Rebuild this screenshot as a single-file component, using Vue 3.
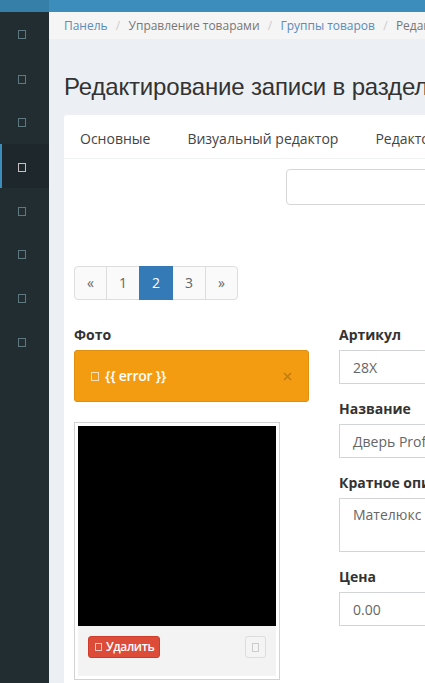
<script setup>
const menu = [0, 1, 2, 3, 4, 5, 6, 7]
const nudged = [1, 3, 4]
const pages = ['«', '1', '2', '3', '»']
const fields = [
  { label: 'Артикул', value: '28X' },
  { label: 'Название', value: 'Дверь Profil Doors' },
  { label: 'Кратное описание', value: 'Мателюкс', area: true },
  { label: 'Цена', value: '0.00' },
]
</script>

<template>
  <div class="page">
    <header class="topbar"><div class="logo"></div></header>
    <div class="body">
      <aside class="sidebar">
        <a v-for="i in menu" :key="i" class="item" :class="{ active: i === 3, nudged: nudged.includes(i) }"><i class="glyph"></i></a>
      </aside>
      <main class="content">
        <nav class="crumbs">
          <a>Панель</a><span class="sep">/</span><span>Управление товарами</span><span class="sep">/</span><a>Группы товаров</a><span class="sep">/</span><span>Редактирование</span>
        </nav>
        <h1>Редактирование записи в разделе</h1>
        <section class="card">
          <div class="tabs"><a>Основные</a><a>Визуальный редактор</a><a>Редактор</a></div>
          <div class="search"></div>
          <div class="pages">
            <a v-for="p in pages" :key="p" :class="{ on: p === '2' }">{{ p }}</a>
          </div>
          <div class="cols">
            <div class="photo">
              <label>Фото</label>
              <div class="alert">
                <i class="glyph"></i><span class="msg" v-pre>{{ error }}</span>
                <svg class="close" viewBox="0 0 9 9"><path d="M1 1 8 8M8 1 1 8" /></svg>
              </div>
              <div class="thumb">
                <div class="image"></div>
                <div class="caption">
                  <button class="delete"><i class="glyph"></i><span>Удалить</span></button>
                  <button class="move"><i class="glyph"></i></button>
                </div>
              </div>
            </div>
            <div class="form">
              <div v-for="f in fields" :key="f.label" class="group">
                <label>{{ f.label }}</label>
                <div class="control" :class="{ area: f.area }">{{ f.value }}</div>
              </div>
            </div>
          </div>
        </section>
      </main>
    </div>
  </div>
</template>

<style>
body { overflow: hidden; }
</style>

<style scoped>
* { box-sizing: border-box; }
.page { width: 425px; height: 683px; overflow: hidden; font: 14px/20px "Open Sans", sans-serif; color: #333; display: flex; flex-direction: column; }
.topbar { height: 12px; flex: none; background: #3c8dbc; }
.logo { width: 49px; height: 12px; background: #367fa9; }
.body { flex: 1; display: flex; min-height: 0; }
.sidebar { width: 49px; flex: none; background: #222d32; }
.item { display: flex; height: 44px; padding: 18px 0 0 15px; border-left: 3px solid transparent; color: #5f777f; }
.item.nudged { padding-top: 19px; }
.item.active { background: #1e282c; border-left: 2px solid #3c8dbc; padding-left: 16px; color: #c9bfc3; }
.glyph { display: block; flex: none; width: 8px; height: 9px; border: 1px solid currentColor; }
.content { flex: 1; min-width: 0; overflow: hidden; background: #ecf0f5; }
.crumbs { display: flex; height: 27px; padding-left: 15px; background: #f5f5f5; font-size: 12px; line-height: 27px; letter-spacing: -.02px; white-space: nowrap; color: #777; }
.crumbs a { color: #5b8bb8; }
.sep { width: 21px; text-align: center; color: #ccc; flex: none; }
h1 { margin: 34px 0 0 15px; height: 42px; font: 400 24px/28px "Liberation Sans", Arial, sans-serif; letter-spacing: -.17px; white-space: nowrap; color: #333; }
.card { width: 700px; height: 600px; margin-left: 15px; background: #fff; border-radius: 3px; }
.tabs { display: flex; height: 44px; gap: 37px; padding: 14px 16px 0; border-bottom: 1px solid #f1f2f4; white-space: nowrap; color: #444; }
.search { width: 400px; height: 36px; margin: 10px 0 0 222px; border: 1px solid #d6d6d8; border-radius: 4px; }
.pages { display: inline-flex; height: 34px; margin: 61px 0 0 10px; border: 1px solid #ddd; border-radius: 4px; background: #fafafa; color: #666; }
.pages a { width: 33px; line-height: 32px; text-align: center; border-left: 1px solid #ddd; }
.pages a:first-child { width: 31px; border: 0; }
.pages a:last-child { width: 32px; }
.pages .on { width: 34px; margin: -1px 0; line-height: 34px; background: #337ab7; border: 0; color: #fff; }
.pages .on + a { border: 0; width: 32px; }
.cols { display: flex; gap: 30px; padding: 25px 10px 0; }
label { display: block; height: 20px; margin-bottom: 5px; font-weight: 700; white-space: nowrap; }
.photo { width: 235px; flex: none; }
.alert { display: flex; align-items: center; height: 52px; padding: 0 16px; background: #f39c12; border: 1px solid #df9010; border-radius: 3px; color: #fff; }
.alert .glyph { height: 9px; margin-right: 6px; opacity: .7; }
.msg { font-weight: 600; letter-spacing: -.22px; }
.close { width: 9px; height: 9px; margin-left: auto; fill: none; stroke: #c27d0f; stroke-width: 1.7; }
.thumb { width: 206px; height: 258px; margin-top: 20px; padding: 3px; border: 1px solid #d2d2d2; }
.image { height: 200px; background: #000; }
.caption { display: flex; justify-content: space-between; height: 50px; padding: 10px; background: #f3f3f3; }
button { display: flex; align-items: center; height: 22px; margin: 0; font: 600 12px/18px "Open Sans", sans-serif; border-radius: 3px; }
.delete { width: 72px; padding: 0 6px; gap: 4px; background: #dd4b39; border: 1px solid #d03c2a; color: #fff; letter-spacing: -.38px; }
.delete .glyph { width: 7px; height: 8px; opacity: .7; }
.move { width: 21px; justify-content: center; padding: 0; background: #f4f4f4; border: 1px solid #ddd; color: #ccc; }
.move .glyph { width: 7px; height: 9px; }
.form { flex: 1; }
.group { margin-bottom: 15px; }
.control { height: 34px; padding: 7px 12px 5px 13px; border: 1px solid #d2d4d8; color: #666; white-space: nowrap; }
.control.area { height: 54px; padding-top: 6px; }
</style>
